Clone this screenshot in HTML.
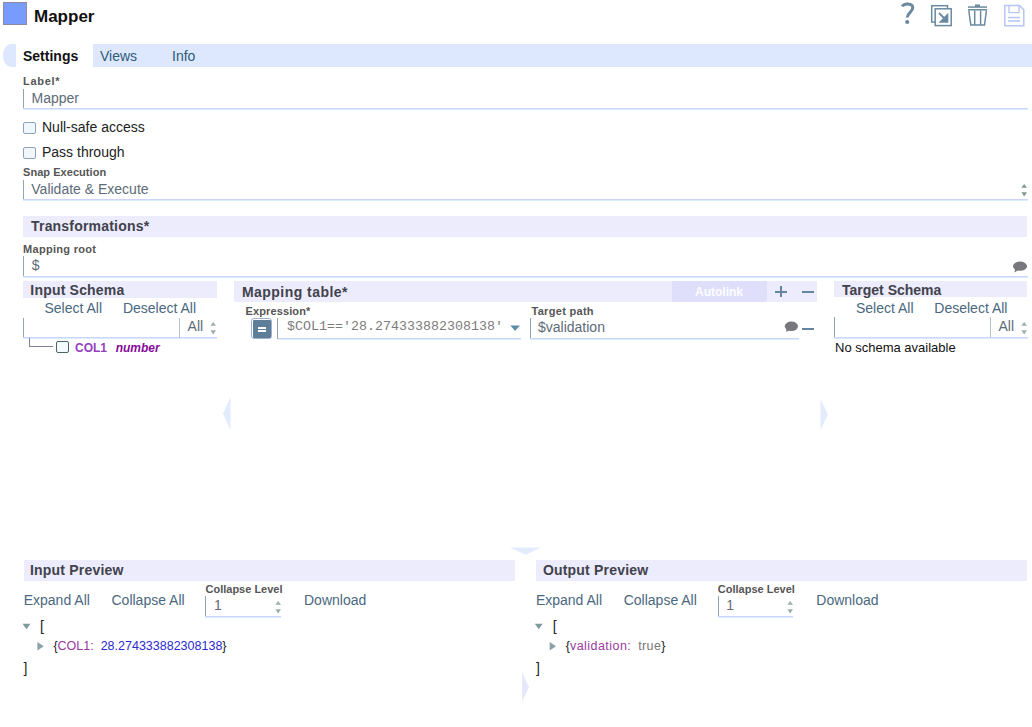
<!DOCTYPE html>
<html><head><meta charset="utf-8">
<style>
html,body{margin:0;padding:0;background:#fff;width:1032px;height:727px;overflow:hidden;position:relative;font-family:"Liberation Sans",sans-serif;}
.a{position:absolute;}
.t{position:absolute;white-space:nowrap;line-height:1;font-size:14px;}
.b{font-weight:bold;}
.lbl{font-size:11px;font-weight:bold;color:#555;letter-spacing:0.3px;}
.hd{font-size:14px;font-weight:bold;color:#42424c;letter-spacing:0.2px;}
.lnk{color:#4a6880;}
.bar{position:absolute;background:#ececfd;}
.lb{position:absolute;width:1px;background:#8ea8a8;}
.bb{position:absolute;height:1px;background:#d0d4fc;box-shadow:0 1px 0 #d6effe;}
.cb{position:absolute;width:11px;height:10px;border:1px solid #8fa3b8;border-radius:2px;background:#f1f6fd;}
.gry{color:#5d6b78;}
</style></head><body>

<!-- header -->
<div class="a" style="left:3px;top:2px;width:22px;height:21px;border:1px solid #8c8a9c;background:#789cfd;"></div>
<div class="t b" style="left:34px;top:7.6px;font-size:17px;color:#111;">Mapper</div>

<!-- tabs -->
<div class="bar" style="left:3px;top:44px;width:1029px;height:23px;border-radius:8px 0 0 8px / 11px 0 0 11px;background:#dde8ff;"></div>
<div class="a" style="left:16px;top:44px;width:77px;height:23px;background:#fff;"></div>
<div class="t b" style="left:23px;top:49px;color:#111;">Settings</div>
<div class="t" style="left:100px;top:49px;color:#2f5a78;">Views</div>
<div class="t" style="left:172px;top:49px;color:#2f5a78;">Info</div>

<!-- label -->
<div class="t lbl" style="left:23px;top:76.4px;letter-spacing:0.7px;">Label*</div>
<div class="lb" style="left:23px;top:89px;height:20px;"></div>
<div class="bb" style="left:23px;top:108px;width:1005px;"></div>
<div class="t gry" style="left:31.5px;top:90.5px;">Mapper</div>

<!-- checkboxes -->
<div class="cb" style="left:23px;top:122px;"></div>
<div class="t" style="left:42px;top:120px;color:#222;">Null-safe access</div>
<div class="cb" style="left:23px;top:147px;"></div>
<div class="t" style="left:42px;top:145px;color:#222;">Pass through</div>

<!-- snap execution -->
<div class="t lbl" style="left:23px;top:167.2px;letter-spacing:0.05px;">Snap Execution</div>
<div class="lb" style="left:23px;top:180px;height:20px;"></div>
<div class="bb" style="left:23px;top:199px;width:1005px;"></div>
<div class="t gry" style="left:31.3px;top:181.5px;">Validate &amp; Execute</div>

<!-- transformations -->
<div class="bar" style="left:23px;top:216px;width:1004px;height:21px;"></div>
<div class="t hd" style="left:31px;top:218.8px;">Transformations*</div>
<div class="t lbl" style="left:23px;top:244.4px;">Mapping root</div>
<div class="lb" style="left:23px;top:256px;height:21px;"></div>
<div class="bb" style="left:23px;top:276px;width:1005px;"></div>
<div class="t gry" style="left:31.7px;top:258px;">$</div>

<!-- input schema -->
<div class="bar" style="left:23px;top:281px;width:194px;height:17px;"></div>
<div class="t hd" style="left:30.3px;top:282.9px;">Input Schema</div>
<div class="t lnk" style="left:44.5px;top:300.8px;">Select All</div>
<div class="t lnk" style="left:122.9px;top:300.8px;">Deselect All</div>
<div class="lb" style="left:23px;top:318px;height:20px;"></div>
<div class="bb" style="left:23px;top:337px;width:194px;"></div>
<div class="lb" style="left:179px;top:318px;height:20px;background:#b9c4cc;"></div>
<div class="t gry" style="left:187.6px;top:319.2px;">All</div>

<!-- mapping table -->
<div class="bar" style="left:234px;top:281px;width:583px;height:21px;"></div>
<div class="t hd" style="left:242px;top:284.8px;letter-spacing:0.45px;">Mapping table*</div>
<div class="a" style="left:672px;top:281px;width:95px;height:21px;background:#dfdffc;border-radius:2px;"></div>
<div class="t b" style="left:695px;top:286px;font-size:12px;color:#fdfdff;">Autolink</div>
<div class="t lbl" style="left:245.5px;top:306.1px;letter-spacing:0.12px;">Expression*</div>
<div class="a" style="left:251px;top:318px;width:19px;height:19px;border:1px solid #9fb2cc;border-radius:3px;background:#fff;"></div><div class="a" style="left:253px;top:320px;width:18px;height:18px;border-radius:1px;background:#5f7f99;"></div>
<div class="lb" style="left:277px;top:318px;height:21px;"></div>
<div class="bb" style="left:278px;top:338px;width:243px;"></div>
<div class="t" style="left:287px;top:320.1px;font-family:'Liberation Mono',monospace;font-size:13.33px;color:#7c7c7c;">$COL1=='28.274333882308138'</div>
<div class="t lbl" style="left:531.5px;top:306.1px;">Target path</div>
<div class="lb" style="left:530px;top:318px;height:21px;"></div>
<div class="bb" style="left:530px;top:338px;width:269px;"></div>
<div class="t gry" style="left:538px;top:320px;">$validation</div>

<!-- target schema -->
<div class="bar" style="left:834px;top:281px;width:193px;height:16px;"></div>
<div class="t hd" style="left:842px;top:282.9px;letter-spacing:0;">Target Schema</div>
<div class="t lnk" style="left:856px;top:300.8px;">Select All</div>
<div class="t lnk" style="left:934.3px;top:300.8px;">Deselect All</div>
<div class="lb" style="left:834px;top:317px;height:20px;"></div>
<div class="bb" style="left:834px;top:337px;width:194px;"></div>
<div class="lb" style="left:990px;top:317px;height:20px;background:#b9c4cc;"></div>
<div class="t gry" style="left:998.5px;top:319.2px;">All</div>
<div class="t" style="left:835px;top:340.8px;font-size:13px;color:#111;">No schema available</div>

<!-- input preview -->
<div class="bar" style="left:24px;top:560px;width:491px;height:21px;"></div>
<div class="t hd" style="left:30px;top:562.6px;">Input Preview</div>
<div class="t lnk" style="left:23.7px;top:593.2px;">Expand All</div>
<div class="t lnk" style="left:111.5px;top:593.2px;">Collapse All</div>
<div class="t lbl" style="left:205.5px;top:583.6px;letter-spacing:0px;">Collapse Level</div>
<div class="lb" style="left:205px;top:596px;height:21px;"></div>
<div class="bb" style="left:205px;top:616px;width:76px;"></div>
<div class="t gry" style="left:214px;top:597.6px;color:#666878;">1</div>
<div class="t lnk" style="left:304px;top:592.7px;">Download</div>
<div class="t" style="left:40px;top:619.2px;color:#222;">[</div>
<div class="t" style="left:53.4px;top:639.8px;font-size:12.5px;color:#222;">{<span style="color:#9a3aa0">COL1:</span>&nbsp; <span style="color:#2a2ad0">28.274333882308138</span>}</div>
<div class="t" style="left:23.5px;top:660.5px;color:#222;">]</div>

<!-- output preview -->
<div class="bar" style="left:536px;top:560px;width:491px;height:21px;"></div>
<div class="t hd" style="left:542.9px;top:562.6px;">Output Preview</div>
<div class="t lnk" style="left:535.9px;top:593.2px;">Expand All</div>
<div class="t lnk" style="left:623.7px;top:593.2px;">Collapse All</div>
<div class="t lbl" style="left:717.8px;top:583.6px;letter-spacing:0px;">Collapse Level</div>
<div class="lb" style="left:718px;top:596px;height:21px;"></div>
<div class="bb" style="left:718px;top:616px;width:75px;"></div>
<div class="t gry" style="left:726.3px;top:597.6px;color:#666878;">1</div>
<div class="t lnk" style="left:816.3px;top:592.7px;">Download</div>
<div class="t" style="left:552.8px;top:619.2px;color:#222;">[</div>
<div class="t" style="left:565.8px;top:639.8px;font-size:12.5px;color:#222;">{<span style="color:#9a3aa0;letter-spacing:0.45px">validation:</span>&nbsp;&nbsp;<span style="color:#777;letter-spacing:0.4px">true</span>}</div>
<div class="t" style="left:536px;top:660.5px;color:#222;">]</div>


<!-- header icons -->
<svg class="a" style="left:0;top:0" width="1032" height="30" viewBox="0 0 1032 30">
  <path d="M902.3 6.5 C903.5 3.2 912.8 2.6 912.8 7.8 C912.8 11.8 907.2 13 907.2 17.6" fill="none" stroke="#6a8aa0" stroke-width="3"/>
  <circle cx="907.2" cy="22" r="2.1" fill="#6a8aa0"/>
  <rect x="931.7" y="5.7" width="15.8" height="16.4" fill="#fff" stroke="#6a8aa0" stroke-width="1.5"/>
  <rect x="935.2" y="8.8" width="16" height="16.8" fill="#fff" stroke="#6a8aa0" stroke-width="1.5"/>
  <path d="M939 13 L945.5 19.5" stroke="#6a8aa0" stroke-width="1.8"/>
  <path d="M948.3 12.8 L948.3 22.8 L938.5 22.8 Z" fill="#6a8aa0"/>
  <rect x="975" y="4.5" width="5" height="2.5" fill="#6a8aa0"/>
  <rect x="968" y="6.3" width="19" height="1.5" fill="#6a8aa0"/>
  <rect x="968" y="9" width="19" height="1.5" fill="#6a8aa0"/>
  <path d="M968.8 10.5 L970.8 25 L984.5 25 L986.4 10.5" fill="none" stroke="#6a8aa0" stroke-width="1.5"/>
  <path d="M974.7 10.5 V25 M980.6 10.5 V25" stroke="#6a8aa0" stroke-width="1.5"/>
  <path d="M1004.8 5.6 H1019.5 L1023.8 9.8 V25.8 H1004.8 Z" fill="none" stroke="#b6c6f2" stroke-width="1.5"/>
  <path d="M1009 5.6 V12.6 H1019 V5.6" fill="none" stroke="#b6c6f2" stroke-width="1.3"/>
  <path d="M1008 17.5 H1020 M1008 21 H1020" stroke="#b6c6f2" stroke-width="1.3"/>
</svg>

<!-- snap execution spinner -->
<svg class="a" style="left:1018px;top:182px" width="12" height="16" viewBox="0 0 12 16">
  <path d="M3.4 5.8 L6.2 2 L9 5.8 Z M3.4 10.2 L9 10.2 L6.2 14.5 Z" fill="#7c9a92"/>
</svg>

<!-- comment icons -->
<svg class="a" style="left:1010px;top:258px" width="20" height="16" viewBox="0 0 20 16">
  <ellipse cx="10" cy="8.2" rx="7" ry="4.6" fill="#77777d"/>
  <path d="M5 11 L4.5 14.5 L8.5 12 Z" fill="#77777d"/>
</svg>
<svg class="a" style="left:782px;top:318px" width="20" height="16" viewBox="0 0 20 16">
  <ellipse cx="9.4" cy="8.3" rx="6.6" ry="4.8" fill="#77777d"/>
  <path d="M4.5 11 L4 14 L8 12 Z" fill="#77777d"/>
</svg>
<div class="a" style="left:802px;top:327.5px;width:12px;height:2px;background:#6585a0;"></div>
<!-- +/- -->
<div class="a" style="left:775px;top:290.6px;width:11.5px;height:2px;background:#6585a0;"></div>
<div class="a" style="left:780px;top:286px;width:2px;height:11px;background:#6585a0;"></div>
<div class="a" style="left:802px;top:290.6px;width:11.5px;height:2px;background:#6585a0;"></div>

<!-- equals button glyph -->
<div class="a" style="left:258px;top:327px;width:8px;height:2px;background:#fff;"></div>
<div class="a" style="left:258px;top:330px;width:8px;height:2px;background:#fff;"></div>
<!-- expression dropdown triangle -->
<svg class="a" style="left:509px;top:324px" width="12" height="8" viewBox="0 0 12 8">
  <path d="M1.3 1.5 L10.9 1.5 L6.1 7 Z" fill="#5d8cab"/>
</svg>

<!-- all spinners -->
<svg class="a" style="left:207px;top:320px" width="12" height="16" viewBox="0 0 12 16">
  <path d="M3.4 5.8 L6.2 2 L9 5.8 Z M3.4 10.2 L9 10.2 L6.2 14.5 Z" fill="#9ab0aa"/>
</svg>
<svg class="a" style="left:1018px;top:320px" width="12" height="16" viewBox="0 0 12 16">
  <path d="M3.4 5.8 L6.2 2 L9 5.8 Z M3.4 10.2 L9 10.2 L6.2 14.5 Z" fill="#9ab0aa"/>
</svg>

<!-- tree -->
<div class="a" style="left:29px;top:338px;width:1px;height:9px;background:#7f7f9c;"></div>
<div class="a" style="left:29px;top:346px;width:24px;height:1px;background:#7f7f9c;"></div>
<div class="a" style="left:56px;top:341px;width:11px;height:10px;border:1px solid #4c6464;border-radius:2px;background:#f3fbfd;"></div>
<div class="t b" style="left:75px;top:341.5px;font-size:12px;color:#9340c0;">COL1</div>
<div class="t b" style="left:115.7px;top:341.5px;font-size:12px;font-style:italic;color:#850a9a;">number</div>

<!-- faint arrows -->
<svg class="a" style="left:0;top:0" width="1032" height="727" viewBox="0 0 1032 727">
  <path d="M230.5 397 L223 413.5 L230.5 430.5 Z" fill="#e3ecfd"/>
  <path d="M820.5 399 L828 414.5 L820.5 430 Z" fill="#e3ecfd"/>
  <path d="M510 547.5 L541 547.5 L525.5 554.8 Z" fill="#e3ecfd"/>
  <path d="M522 672 L529 687 L522 702 Z" fill="#e6e9fb"/>
</svg>

<!-- preview spinners / triangles -->
<svg class="a" style="left:272px;top:599px" width="12" height="16" viewBox="0 0 12 16">
  <path d="M3.4 5.8 L6.2 2 L9 5.8 Z M3.4 10.2 L9 10.2 L6.2 14.5 Z" fill="#9ab0aa"/>
</svg>
<svg class="a" style="left:784.3px;top:599px" width="12" height="16" viewBox="0 0 12 16">
  <path d="M3.4 5.8 L6.2 2 L9 5.8 Z M3.4 10.2 L9 10.2 L6.2 14.5 Z" fill="#9ab0aa"/>
</svg>
<svg class="a" style="left:0;top:0" width="1032" height="727" viewBox="0 0 1032 727">
  <path d="M22.5 623.7 L30.4 623.7 L26.45 629.2 Z" fill="#7f9aa0"/>
  <path d="M37.4 641.9 L43.8 646.15 L37.4 650.4 Z" fill="#8ca2a8"/>
  <path d="M534.8 623.7 L542.7 623.7 L538.75 629.2 Z" fill="#7f9aa0"/>
  <path d="M549.7 641.9 L556.1 646.15 L549.7 650.4 Z" fill="#8ca2a8"/>
</svg>

</body></html>
